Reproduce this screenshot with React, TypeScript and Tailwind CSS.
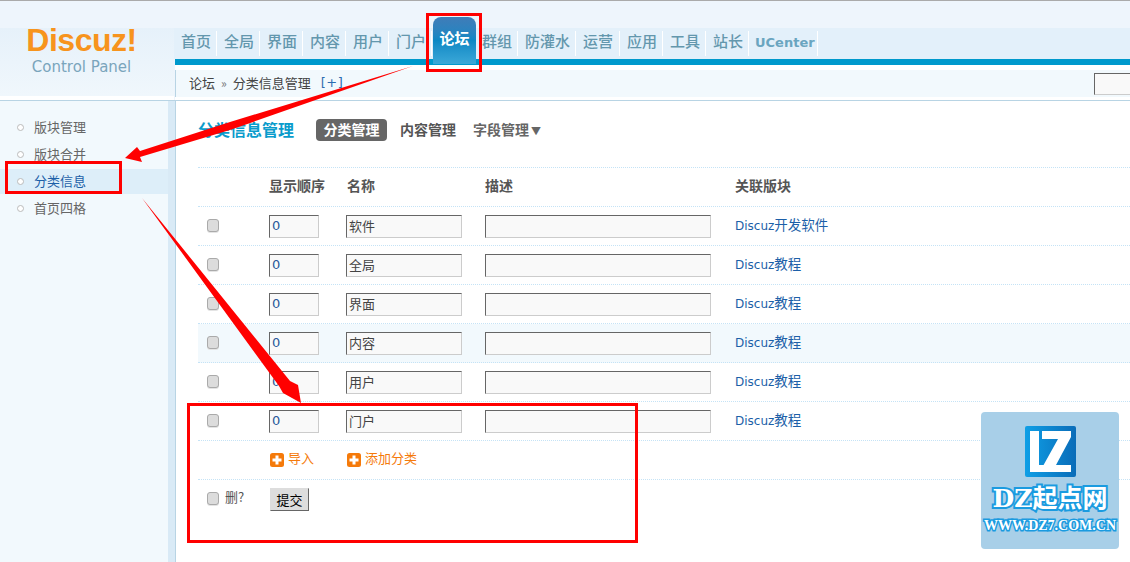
const cjk = "font-['Noto_Sans_CJK_SC','DejaVu_Sans',sans-serif]";

const navItems = [
  { label: "首页", w: "w-[43px]" },
  { label: "全局", w: "w-[43px]" },
  { label: "界面", w: "w-[43px]" },
  { label: "内容", w: "w-[43px]" },
  { label: "用户", w: "w-[43px]" },
  { label: "门户", w: "w-[43px]" },
  { label: "论坛", w: "w-[43px]", active: true },
  { label: "群组", w: "w-[43px]" },
  { label: "防灌水", w: "w-[58px]" },
  { label: "运营", w: "w-[44px]" },
  { label: "应用", w: "w-[43px]" },
  { label: "工具", w: "w-[43px]" },
  { label: "站长", w: "w-[43px]" },
  { label: "UCenter", w: "w-[69px]" },
];

const sideItems = ["版块管理", "版块合并", "分类信息", "首页四格"];

const rows = [
  { name: "软件", link: "Discuz开发软件" },
  { name: "全局", link: "Discuz教程" },
  { name: "界面", link: "Discuz教程" },
  { name: "内容", link: "Discuz教程", hover: true },
  { name: "用户", link: "Discuz教程" },
  { name: "门户", link: "Discuz教程" },
];

function TextBox({ value, className }: { value: string; className: string }) {
  return (
    <div
      className={`h-[23px] shrink-0 border border-t-[#666] border-l-[#666] border-r-[#ccc] border-b-[#ccc] bg-[#f9f9f9] pl-[2px] text-[13px] leading-[19px] ${className}`}
    >
      {value}
    </div>
  );
}

function Check() {
  return <div className="h-[13px] w-3 rounded-[3px] border border-[#aaa] bg-[#dcdcdc] shadow-[0_1px_0_#e4e4e4]" />;
}

function PlusIcon() {
  return (
    <svg width="14" height="14" viewBox="0 0 14 14" className="shrink-0">
      <rect width="14" height="14" rx="2.5" fill="#f57a0a" />
      <path d="M5.5 2.5h3v3h3v3h-3v3h-3v-3h-3v-3h3z" fill="#fff" />
    </svg>
  );
}

function Badge() {
  return (
    <div className="absolute top-[412px] left-[981px] flex h-[137px] w-[138px] flex-col items-center rounded-[4px] bg-[#a8cfe8] pt-[14px]">
      <svg width="51" height="51" viewBox="0 0 51 51">
        <defs>
          <linearGradient id="lz" x1="0" y1="0" x2="1" y2="0">
            <stop offset="0" stopColor="#0f9fe6" />
            <stop offset="1" stopColor="#0a6cb8" />
          </linearGradient>
        </defs>
        <rect width="51" height="51" rx="2" fill="url(#lz)" />
        <path d="M5 5h9v34h5v7H5z" fill="#fff" />
        <path d="M17 5h29v6L31 39h15v7H18v-6L33 13H17z" fill="#fff" />
      </svg>
      <div className="mt-[7px] font-['DejaVu_Serif','Noto_Sans_CJK_SC',serif] text-[25px] leading-[30px] font-bold whitespace-nowrap text-white [-webkit-text-stroke:4px_#1a9be0] [paint-order:stroke]">
        DZ起点网
      </div>
      <div className="mt-[3px] font-['Liberation_Serif',serif] text-[14px] leading-[18px] font-bold whitespace-nowrap text-white [-webkit-text-stroke:3px_#1a9be0] [paint-order:stroke]">
        WWW.DZ7.COM.CN
      </div>
    </div>
  );
}

function Annotations() {
  return (
    <svg className="pointer-events-none absolute top-0 left-0" width="1130" height="562">
      <polygon points="413,66 230,122 140,151 137,147 125,158 142,162 140,157 230,130" fill="#f00" />
      <polygon points="142,198 290,381 298,385 301,403 283,393 279,386" fill="#f00" />
    </svg>
  );
}

export default function App() {
  return (
    <div className={`relative h-[562px] w-[1130px] overflow-hidden bg-white ${cjk}`}>
      {/* header */}
      <div className="flex h-[101px] border-t border-b border-t-[#aaa] border-b-[#b8d4e4] bg-white">
        <div className="flex h-[95px] w-[174px] shrink-0 flex-col items-center bg-[linear-gradient(#eef5fc_27px,#e6f1fa_27px,#f0f7fc_100%)] pt-[20px] pr-[11px]">
          <div className="font-['Liberation_Sans',sans-serif] text-[32px] leading-[38px] font-bold tracking-[-0.5px] text-[#f7941d]">
            Discuz!
          </div>
          <div className="mt-[-1px] font-['DejaVu_Sans',sans-serif] text-[15px] leading-[18px] text-[#7aa5bc]">
            Control Panel
          </div>
        </div>
        <div className="flex-1 bg-[#eef5fc]">
          <div className="mt-[27px] flex h-[31px] bg-[#e3f0fa]">
            {navItems.map((item) => (
              <div
                key={item.label}
                className={`relative mt-[3px] h-[25px] shrink-0 border-r border-white pr-[6px] pl-[7px] text-[15px] leading-[20px] font-medium whitespace-nowrap text-[#6397ad] ${item.w}`}
              >
                {item.active ? (
                  <div className="absolute top-[-14px] left-[1px] flex h-[47px] w-[43px] justify-center rounded-t-[8px] bg-gradient-to-b from-[#3f7cb8] via-[#0a88c4] to-[#3aa8d8] pt-[11px] font-bold text-white">
                    {item.label}
                  </div>
                ) : item.label === "UCenter" ? (
                  <span className="ml-[-1px] font-['DejaVu_Sans',sans-serif] text-[13px] font-bold text-[#6aa5c0]">UCenter</span>
                ) : (
                  item.label
                )}
              </div>
            ))}
          </div>
          <div className="ml-[1px] h-[6px] bg-[#0099cc]" />
          <div className="ml-[1px] flex h-[35px] items-start bg-white pt-[5px]">
            <div className="flex h-[27px] flex-1 items-center justify-between border-l border-[#b8d4e4] bg-[#f2f9fd] pl-[12px]">
              <div className="mt-[-2px] flex items-center pl-[1px] text-[13px] text-[#444]">
                论坛<span className="mx-[6px] text-[12px] text-[#777]">»</span>分类信息管理
                <span className="ml-[10px] font-['DejaVu_Sans',sans-serif] text-[13px] tracking-[0.5px] text-[#2b6cb0]">[+]</span>
              </div>
              <div className="h-[22px] w-[36px] border border-t-[#666] border-r-0 border-b-[#ccc] border-l-[#666] bg-[#f9f9f9]" />
            </div>
          </div>
        </div>
      </div>

      <div className="flex h-[461px]">
        {/* sidebar */}
        <div className="flex w-[176px] shrink-0 border-r border-[#b8d4e4]">
          <div className="w-[168px] bg-[#f2f9fd] pt-[14px]">
            {sideItems.map((label) => (
              <div
                key={label}
                className={`mb-[2px] flex h-[25px] items-center pb-[1px] pl-[17px] text-[13px] ${
                  label === "分类信息" ? "bg-[#ddeef9] text-[#1c5fa8]" : "text-[#666]"
                }`}
              >
                <span className="mr-[10px] h-[7px] w-[7px] rounded-full border border-[#bbb] bg-white" />
                {label}
              </div>
            ))}
          </div>
          <div className="flex-1 bg-[#d9eaf6]" />
        </div>

        {/* main */}
        <div className="flex-1 pt-[18px] pl-[22px]">
          <div className="flex h-[22px] items-center">
            <div className="mt-[-2px] w-[118px] text-[16px] font-bold whitespace-nowrap text-[#0a9ccc]">分类信息管理</div>
            <div className="flex h-[22px] w-[71px] items-center justify-center rounded-[4px] bg-[#666] pb-[1px] text-[14px] font-bold text-white">
              分类管理
            </div>
            <div className="mt-[-2px] ml-[13px] text-[14px] font-bold text-[#555]">内容管理</div>
            <div className="mt-[-2px] ml-[17px] text-[14px] font-bold text-[#666]">
              字段管理<span className="ml-[2px] text-[10px]">▼</span>
            </div>
          </div>

          <div className="mt-[26px] border-t border-dotted border-[#c5e3f6]">
            <div className="flex h-[39px] items-center border-b border-dotted border-[#c5e3f6] pb-[4px] text-[14px] font-bold text-[#555]">
              <div className="ml-[71px] w-[78px]">显示顺序</div>
              <div className="w-[138px]">名称</div>
              <div className="w-[250px]">描述</div>
              <div>关联版块</div>
            </div>
            {rows.map((row) => (
              <div
                key={row.name}
                className={`flex h-[39px] items-center border-b border-dotted border-[#c5e3f6] ${row.hover ? "bg-[#f2f9fd]" : ""}`}
              >
                <div className="w-[71px] pb-[1px] pl-[9px]">
                  <Check />
                </div>
                <TextBox value="0" className="mr-[27px] w-[50px] font-['DejaVu_Sans',sans-serif] text-[#2a5a9a]" />
                <TextBox value={row.name} className="mr-[23px] w-[116px] text-[#444]" />
                <TextBox value="" className="mr-[24px] w-[226px]" />
                <div className="mt-[-4px] text-[13.5px] text-[#1c5fa8]">
                  <span className="font-['DejaVu_Sans',sans-serif] text-[12px]">Discuz</span>
                  {row.link.replace("Discuz", "")}
                </div>
              </div>
            ))}
            <div className="flex h-[39px] items-center border-b border-dotted border-[#c5e3f6] pl-[72px] text-[13px] text-[#f57a0a]">
              <PlusIcon />
              <span className="mt-[-4px] ml-[4px] w-[59px]">导入</span>
              <PlusIcon />
              <span className="mt-[-4px] ml-[4px]">添加分类</span>
            </div>
            <div className="flex h-[39px] items-center">
              <div className="mt-[-3px] flex w-[72px] items-center pl-[9px] text-[13px] text-[#555]">
                <Check />
                <span className="mt-[-2px] ml-[6px]">删?</span>
              </div>
              <div className="flex h-[23px] w-[39px] items-center justify-center border border-t-[#ddd] border-r-[#666] border-b-[#666] border-l-[#ddd] bg-[#ddd] text-[13px] text-black">
                提交
              </div>
            </div>
          </div>
        </div>
      </div>

      <Badge />
      <Annotations />
      {/* red highlight boxes */}
      <div className="absolute top-[13px] left-[426px] h-[59px] w-[56px] border-[3px] border-[#f00]" />
      <div className="absolute top-[161px] left-[5px] h-[33px] w-[117px] border-[3px] border-[#f00]" />
      <div className="absolute top-[403px] left-[187px] h-[140px] w-[451px] border-[3px] border-[#f00]" />
    </div>
  );
}
